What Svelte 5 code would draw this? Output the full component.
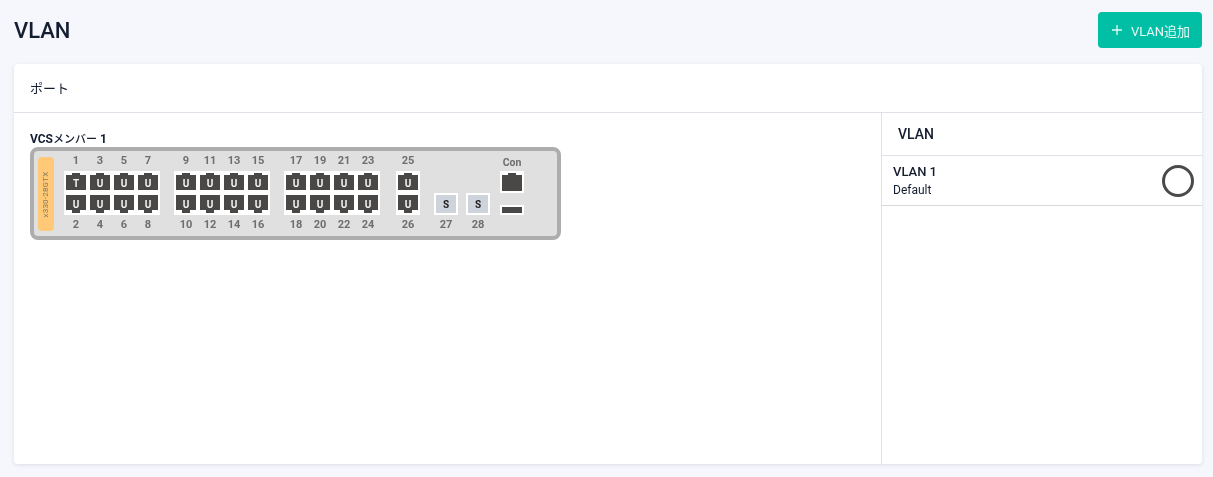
<script>
	// numero de puerto por columna: arriba / abajo, con la etiqueta de cada enlace
	const groups = [
		[[1, 2, 'T', 'U'], [3, 4, 'U', 'U'], [5, 6, 'U', 'U'], [7, 8, 'U', 'U']],
		[[9, 10, 'U', 'U'], [11, 12, 'U', 'U'], [13, 14, 'U', 'U'], [15, 16, 'U', 'U']],
		[[17, 18, 'U', 'U'], [19, 20, 'U', 'U'], [21, 22, 'U', 'U'], [23, 24, 'U', 'U']],
		[[25, 26, 'U', 'U']]
	];
	const sfps = [27, 28];
</script>

<div class="page">
	<header class="top">
		<h1>VLAN</h1>
		<button class="add">
			<svg width="12" height="12" viewBox="0 0 12 12"><path d="M6 1v10M1 6h10" stroke="currentColor" stroke-width="1.3" fill="none" /></svg>
			<span>VLAN追加</span>
		</button>
	</header>

	<section class="card">
		<div class="card-head">ポート</div>
		<div class="card-body">
			<div class="ports">
				<div class="member">VCS<span class="kana">メンバー</span> 1</div>
				<div class="chassis">
					<div class="model"><span>x330-28GTX</span></div>
					{#each groups as group}
						<div class="group">
							<div class="nums over">
								{#each group as col}<span class="num">{col[0]}</span>{/each}
							</div>
							<div class="block">
								<div class="row">
									{#each group as col}
										<div class="port up"><span>{col[2]}</span></div>
									{/each}
								</div>
								<div class="row">
									{#each group as col}
										<div class="port down"><span>{col[3]}</span></div>
									{/each}
								</div>
							</div>
							<div class="nums under">
								{#each group as col}<span class="num">{col[1]}</span>{/each}
							</div>
						</div>
					{/each}
					<div class="sfps">
						{#each sfps as n}
							<div class="sfp-col">
								<div class="sfp"><span>S</span></div>
								<div class="nums under"><span class="num">{n}</span></div>
							</div>
						{/each}
					</div>
					<div class="console">
						<span class="num con">Con</span>
						<div class="con-port"><div class="port up"></div></div>
						<div class="con-usb"><i></i></div>
					</div>
				</div>
			</div>
			<aside class="side">
				<div class="side-head">VLAN</div>
				<div class="vlan">
					<div>
						<div class="vlan-name">VLAN 1</div>
						<div class="vlan-desc">Default</div>
					</div>
					<div class="ring"></div>
				</div>
			</aside>
		</div>
	</section>
</div>

<style>
	:global(body) {
		background: #f5f7fc;
		font-family: Roboto, "Noto Sans CJK JP", sans-serif;
		color: #141e30;
	}

	.page {
		padding: 12px 11px 13px 14px;
		height: 477px;
		box-sizing: border-box;
		display: flex;
		flex-direction: column;
		/* capa propia: el texto sale en gris, sin franjas de color */
		will-change: transform;
	}

	.top {
		display: flex;
		justify-content: space-between;
		align-items: center;
		height: 36px;
		margin-bottom: 16px;
	}

	h1 {
		margin: 0;
		font-size: 22px;
		font-weight: 500;
		color: #141e30;
	}

	.add {
		width: 104px;
		height: 36px;
		border: none;
		border-radius: 4px;
		background: #00bfa5;
		color: #e6f9f6;
		font-family: inherit;
		font-size: 13px;
		font-weight: 400;
		display: flex;
		align-items: center;
		justify-content: center;
		gap: 8px;
		padding: 0 0 0 1px;
	}

	.card {
		flex: 1;
		background: #fff;
		border-radius: 4px;
		box-shadow: 0 1px 4px rgba(30, 40, 70, 0.12);
		display: flex;
		flex-direction: column;
	}

	.card-head {
		height: 49px;
		box-sizing: border-box;
		border-bottom: 1px solid #dfe1e8;
		padding: 0 16px;
		display: flex;
		align-items: center;
		font-size: 13px;
		line-height: 1;
	}

	.card-body {
		flex: 1;
		display: flex;
	}

	.ports {
		width: 867px;
		box-sizing: border-box;
		padding: 19px 16px;
	}

	.member {
		font-size: 12px;
		font-weight: 700;
		line-height: 15px;
		color: #141e30;
	}

	.kana {
		font-size: 11px;
		font-weight: 500;
	}

	.chassis {
		width: 531px;
		height: 93px;
		box-sizing: border-box;
		border: 4px solid #adadad;
		border-radius: 8px;
		background: #e0e0e0;
		display: flex;
		padding: 2px 0 0 4px;
	}

	.model {
		width: 16px;
		height: 74px;
		margin-top: 4px;
		background: #ffc977;
		border-radius: 4px;
		display: flex;
		align-items: center;
		justify-content: center;
		margin-right: 10px;
	}

	.model span {
		font-size: 8px;
		letter-spacing: 0.2px;
		color: #85795f;
		transform: rotate(-90deg);
		white-space: nowrap;
	}

	.group {
		margin-right: 14px;
	}

	.group:nth-of-type(4) {
		margin-right: 16px;
	}

	.nums {
		display: flex;
		height: 18px;
		box-sizing: border-box;
		align-items: center;
	}

	.nums.over {
		padding-bottom: 2px;
	}

	.nums.under {
		padding-top: 2px;
	}

	.num {
		width: 24px;
		text-align: center;
		font-size: 11px;
		font-weight: 700;
		color: #6e6e6e;
		line-height: 14px;
	}

	.block {
		background: #fff;
		padding: 2px 0;
		height: 44px;
		box-sizing: border-box;
		display: flex;
		flex-direction: column;
		gap: 5px;
	}

	.row {
		display: flex;
	}

	.port {
		position: relative;
		width: 20px;
		height: 15px;
		margin: 2px 2px 0;
		box-sizing: border-box;
		background: #4a4846;
		color: #f4f4f4;
		font-size: 10px;
		font-weight: 700;
		display: flex;
		align-items: center;
		justify-content: center;
	}

	.port.up {
		padding-top: 1px;
	}

	.port.down {
		margin: 0 2px 2px;
		padding-top: 4px;
	}

	.port::before {
		content: "";
		position: absolute;
		left: 6px;
		width: 8px;
		height: 2px;
		background: #4a4846;
	}

	.port.up::before {
		top: -2px;
	}

	.port.down::before {
		bottom: -3px;
		height: 3px;
	}

	.sfps {
		display: flex;
		gap: 8px;
		margin-right: 10px;
		padding-top: 40px;
	}

	.sfp-col {
		display: flex;
		flex-direction: column;
		height: 40px;
	}

	.sfp {
		width: 24px;
		height: 22px;
		box-sizing: border-box;
		border: 2px solid #fff;
		background: #cfd4dc;
		color: #1c1c1c;
		font-size: 10px;
		font-weight: 700;
		display: flex;
		align-items: center;
		justify-content: center;
	}

	.console {
		width: 24px;
		display: flex;
		flex-direction: column;
	}

	.con {
		font-size: 10.5px;
		height: 18px;
		line-height: 19px;
	}

	.con-port {
		width: 24px;
		height: 22px;
		background: #fff;
		padding-top: 2px;
		box-sizing: border-box;
	}

	.con-port .port {
		height: 16px;
		margin-top: 2px;
	}

	.con-usb {
		width: 24px;
		height: 10px;
		margin-top: 12px;
		background: #fff;
		padding: 2px;
		box-sizing: border-box;
	}

	.con-usb i {
		display: block;
		height: 6px;
		background: #4a4846;
	}

	.side {
		flex: 1;
		border-left: 1px solid #dfe1e8;
	}

	.side-head {
		height: 43px;
		box-sizing: border-box;
		border-bottom: 1px solid #dfe1e8;
		padding-left: 16px;
		display: flex;
		align-items: center;
		font-size: 14px;
		font-weight: 500;
	}

	.vlan {
		height: 50px;
		box-sizing: border-box;
		border-bottom: 1px solid #d8d8dc;
		padding: 0 8px 0 11px;
		display: flex;
		align-items: center;
		justify-content: space-between;
	}

	.vlan-name {
		font-size: 13px;
		font-weight: 500;
		line-height: 18px;
	}

	.vlan-desc {
		font-size: 12px;
		line-height: 18px;
	}

	.ring {
		width: 32px;
		height: 32px;
		box-sizing: border-box;
		border: 3px solid #4a4a4a;
		border-radius: 50%;
	}
</style>
